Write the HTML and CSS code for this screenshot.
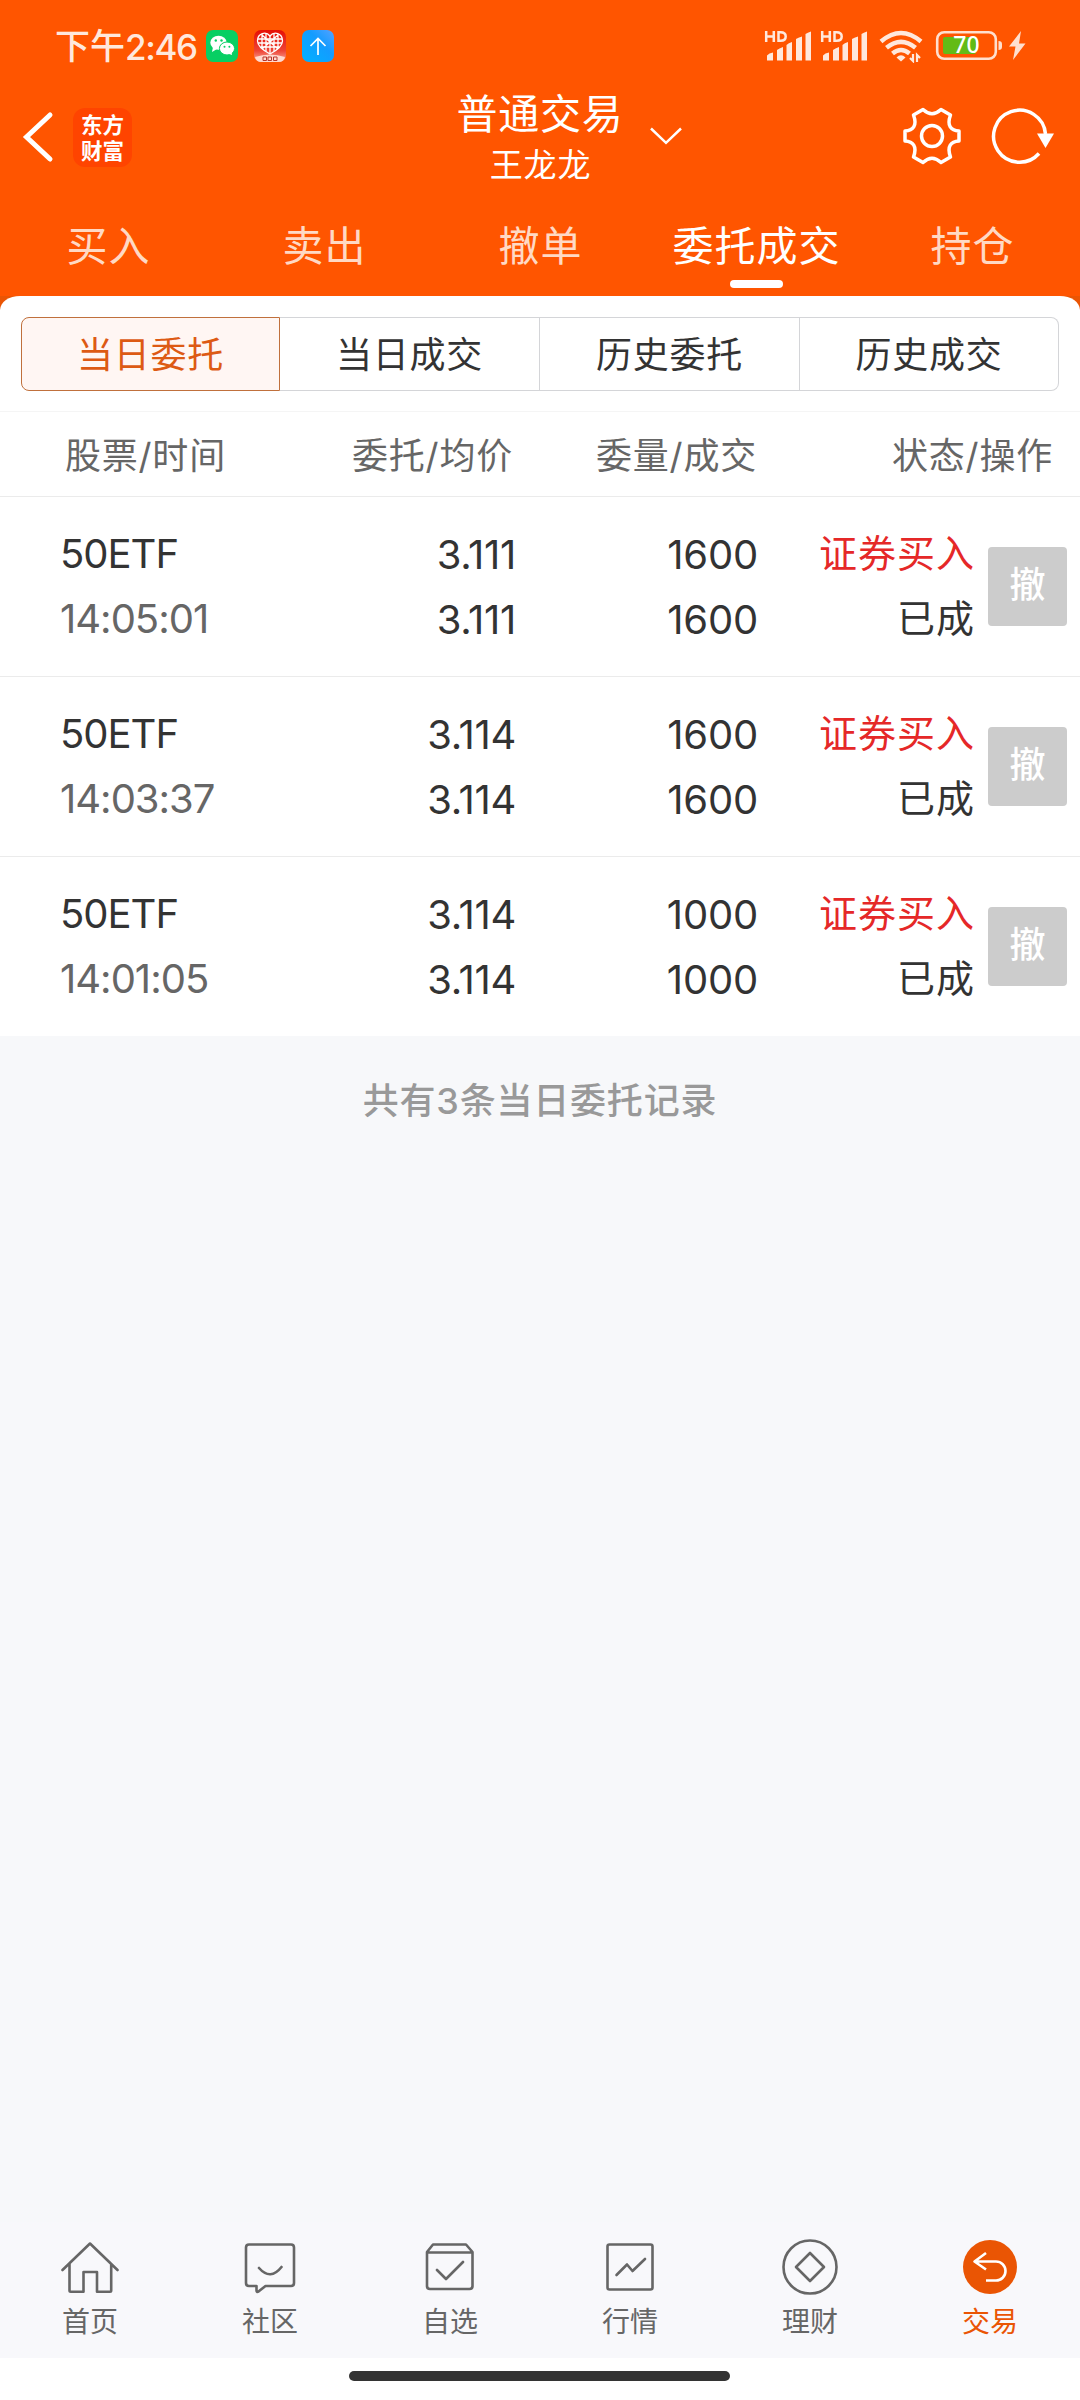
FILE: index.html
```html
<!DOCTYPE html>
<html lang="zh-CN">
<head>
<meta charset="utf-8">
<title>普通交易</title>
<link rel="stylesheet" href="styles.css">
</head>
<body>
<div class="screen">
  <header class="top">
    <div class="status">
      <span class="clock"><span>下午</span><span class="clock-num">2:46</span></span>
      <svg class="apps" width="128" height="32" viewBox="0 0 128 32">
        <defs>
          <linearGradient id="red" x1="0" y1="0" x2="0" y2="1"><stop offset="0" stop-color="#e60f05"/><stop offset=".65" stop-color="#ee4436"/><stop offset="1" stop-color="#fbb0a2"/></linearGradient>
          <linearGradient id="blue" x1="0" y1="1" x2="1" y2="0"><stop offset="0" stop-color="#00b2ff"/><stop offset=".6" stop-color="#149cff"/><stop offset="1" stop-color="#55a2ff"/></linearGradient>
        </defs>
        <rect width="32" height="32" rx="7" fill="#07cf63"/>
        <ellipse cx="12.500" cy="12.800" rx="8.200" ry="7" fill="#fff"/>
        <path d="M7 17l-1 5 5-3z" fill="#fff"/>
        <circle cx="9.800" cy="10.500" r="1.200" fill="#07cf63"/><circle cx="15.500" cy="10.500" r="1.200" fill="#07cf63"/>
        <ellipse cx="21" cy="18.500" rx="7.600" ry="6.500" fill="#fff" stroke="#07cf63" stroke-width="1"/>
        <path d="M22 23.500l4 1.500-.5-4z" fill="#fff"/>
        <circle cx="18.500" cy="16.800" r="1" fill="#07cf63"/><circle cx="23.400" cy="16.800" r="1" fill="#07cf63"/>
        <rect x="48" width="32" height="32" rx="7" fill="url(#red)"/>
        <g fill="none" stroke="#fff" stroke-width="1.300">
          <path d="M64 6C60 1 51.500 3 51.500 11c0 5 5 9 12.500 13 7.500-4 12.500-8 12.500-13C76.500 3 68 1 64 6z"/>
          <path d="M56 4v14M60 4v17M64 6v17M68 4v17M72 4v14M52 9h24M52 13h24M55 17h18M56 5l16 14M72 5L56 19"/>
        </g>
        <path d="M49 27q15-5 30 0-1 5-7 5H56q-6 0-7-5z" fill="#ffd9cf"/>
        <path d="M57 27h3.500v3.500H57zM62 27h3.500v3.500H62zM67.500 27H71v3.500h-3.500z" fill="none" stroke="#b8372c" stroke-width="1"/>
        <rect x="96" width="32" height="32" rx="7" fill="url(#blue)"/>
        <path d="M112 25V8.500M104.500 16l7.500-7.500 7.500 7.500" fill="none" stroke="#fff" stroke-width="1.700"/>
      </svg>
      <svg class="signals" width="262" height="34" viewBox="764 30 262 34">
        <defs>
          <g id="signal">
            <path d="M766.200 32v11M773.800 32v11M766 37.500h7.500M778.500 33.200v8.600h2q5.200 0 5.200-4.300t-5.200-4.300z" fill="none" stroke="#ffe8dc" stroke-width="2.500"/>
            <path d="M767 56.500q2-2.500 6-3V61.500h-6zM777 51q2-1.500 6-3V61.500h-6zM786.500 46q2-2 5.500-3V61.500h-5.500zM796 40q2-1.500 6-2.500V61.500h-6zM805.500 35q2-1.500 5.500-2.500V61.500h-5.500z" fill="#ffe8dc"/>
          </g>
        </defs>
        <use href="#signal"/>
        <use href="#signal" x="56"/>
        <g fill="none" stroke="#ffe8dc" stroke-width="4.500">
          <path d="M881 42.500q20-17 40 0M886.500 48.800q14.500-12 29 0M892.500 54.500q8.500-7 17 0"/>
          <path d="M913 55v7l-3-3M917 63v-7l3 3" stroke-width="2.200"/>
        </g>
        <path d="M896.500 58.500q4.500-4.500 9 0L901 62.500z" fill="#ffe8dc"/>
        <rect x="937.200" y="33.200" width="58.600" height="26.600" rx="7" fill="none" stroke="#ffdfce" stroke-width="2.600"/>
        <rect x="943" y="38" width="33" height="17" rx="2" fill="#63bb16"/>
        <path d="M998.500 42q3.500 0 3.500 3v3q0 3-3.500 3z" fill="#ffdfce"/>
        <path d="M1021 32l-12 15.500h6.500L1013 61l12.500-16.500h-6.500z" fill="#ffdfce"/>
        <text x="966.500" y="54" class="battery">70</text>
      </svg>
    </div>
    <div class="bar">
      <div class="bar-left">
        <svg width="34" height="54" viewBox="0 0 34 54"><path d="M28 5L4.500 27 28 49" fill="none" stroke="#fff" stroke-width="5" stroke-linecap="round"/></svg>
        <div class="logo">东方<br>财富</div>
      </div>
      <div class="title"><span class="title-main">普通交易</span><span class="title-sub">王龙龙</span></div>
      <svg class="caret" width="34" height="20" viewBox="0 0 34 20"><path d="M2 2.500l15 14.300 15-14.300" fill="none" stroke="#fff" stroke-width="2.500"/></svg>
      <div class="bar-right">
        <svg width="60" height="60" viewBox="-30 -30 60 60" fill="none" stroke="#fff" stroke-width="3.500" stroke-linejoin="round">
          <circle r="10.500"/>
          <path d="M-9 -26.500Q0 -18 9 -26.500L18.500 -21C14.500 -10 19 -5.500 27 -5V5C19 5.500 14.500 10 18.500 21L9 26.500Q0 18 -9 26.500L-18.500 21C-14.500 10 -19 5.500 -27 5V-5C-19 -5.500 -14.500 -10 -18.500 -21Z"/>
        </svg>
        <svg width="66" height="60" viewBox="-30 -30 66 60"><path d="M19 17.500A26 26 0 1 1 25.500 -2" fill="none" stroke="#fff" stroke-width="3.500"/><path d="M17 -2.500h17L25.500 12z" fill="#fff"/></svg>
      </div>
    </div>
    <nav class="tabs">
      <span class="tab">买入</span><span class="tab">卖出</span><span class="tab">撤单</span><span class="tab tab-on">委托成交</span><span class="tab">持仓</span>
    </nav>
  </header>
  <main class="content">
    <div class="sheet-back">
      <div class="sheet">
        <div class="segments"><span class="seg seg-on">当日委托</span><span class="seg">当日成交</span><span class="seg">历史委托</span><span class="seg">历史成交</span></div>
      </div>
    </div>
    <div class="cols head"><span class="h-name">股票/时间</span><span class="h-num">委托/均价</span><span class="h-num">委量/成交</span><span class="h-state">状态/操作</span></div>
    <div class="cols row">
      <div class="pair name"><span>50ETF</span><span class="time">14:05:01</span></div>
      <div class="pair price"><span>3.111</span><span>3.111</span></div>
      <div class="pair amount"><span>1600</span><span>1600</span></div>
      <div class="pair state"><span class="buy">证券买入</span><span>已成</span></div>
      <span class="cancel">撤</span>
    </div>
    <div class="cols row">
      <div class="pair name"><span>50ETF</span><span class="time">14:03:37</span></div>
      <div class="pair price"><span>3.114</span><span>3.114</span></div>
      <div class="pair amount"><span>1600</span><span>1600</span></div>
      <div class="pair state"><span class="buy">证券买入</span><span>已成</span></div>
      <span class="cancel">撤</span>
    </div>
    <div class="cols row">
      <div class="pair name"><span>50ETF</span><span class="time">14:01:05</span></div>
      <div class="pair price"><span>3.114</span><span>3.114</span></div>
      <div class="pair amount"><span>1000</span><span>1000</span></div>
      <div class="pair state"><span class="buy">证券买入</span><span>已成</span></div>
      <span class="cancel">撤</span>
    </div>
    <p class="summary">共有3条当日委托记录</p>
  </main>
  <nav class="bottom">
    <div class="item"><svg viewBox="60 2237 60 60"><path d="M62.500 2270L90 2243.500 117.500 2270M69.500 2264v26.500q0 1.200 1.200 1.200H83.500V2272h13.500v19.700h13q1.200 0 1.200-1.200V2264"/></svg><span>首页</span></div>
    <div class="item"><svg viewBox="240 2237 60 60"><path d="M249 2244.500h42q3 0 3 3v35.500q0 3-3 3H265.500l-7 5.500q-2 1-2-1V2286H249q-3 0-3-3v-35.500q0-3 3-3zM259 2268q11.500 13 22.500-1"/></svg><span>社区</span></div>
    <div class="item"><svg viewBox="420 2237 60 60"><path d="M427 2252.500h45.500M427 2252l6-7.500h33l6.500 7.500v34q0 3-3 3h-39.500q-3 0-3-3zM437 2270l9 9 17-17"/></svg><span>自选</span></div>
    <div class="item"><svg viewBox="600 2237 60 60"><rect x="607.500" y="2244.500" width="45" height="45" rx="2"/><path d="M616.500 2275l10.500-10.500 5.500 6.500 12.500-12"/></svg><span>行情</span></div>
    <div class="item"><svg viewBox="780 2237 60 60"><circle cx="810" cy="2267" r="26.500"/><path d="M810 2253l14 14-14 14-14-14z"/></svg><span>理财</span></div>
    <div class="item item-on"><svg viewBox="960 2237 60 60"><circle cx="990" cy="2267" r="27" fill="#ea5504" stroke="none"/><path d="M986 2253l-11.500 8.500 11.500 8M974.500 2261.500H996a9.300 9.300 0 0 1 0 19H986" stroke="#fff" stroke-linecap="butt"/></svg><span>交易</span></div>
  </nav>
  <div class="gesture"><div class="pill"></div></div>
</div>
</body>
</html>
```

FILE: styles.css
```css
* { box-sizing: border-box; }
body { margin: 0; font-family: Inter, "Noto Sans CJK SC", sans-serif; color: #333; }
svg { display: block; flex: none; }
.screen { width: 1080px; height: 2400px; display: flex; flex-direction: column; background: #f7f8fa; white-space: nowrap; }
.top { height: 296px; background: #ff5500; color: #fff; }
.status { height: 92px; display: flex; align-items: center; padding: 0 54px 0 55px; }
.clock { width: 151px; display: flex; align-items: center; font-size: 35px; line-height: 40px; font-weight: 500; color: #ffe8dc; }
.clock-num { letter-spacing: -1.4px; padding-top: 1px; }
.signals { margin-left: auto; }
.battery { font: 500 23px "Noto Sans", sans-serif; fill: #fff; text-anchor: middle; }
.bar { height: 112px; display: grid; grid-template-columns: 458px 164px 1fr auto; padding-right: 24px; }
.bar-left { display: flex; align-items: center; gap: 17px; padding: 0 0 22px 22px; }
.logo { width: 59px; height: 59px; padding-top: 3px; border-radius: 12px; background: #ff4400; text-align: center; font: 700 21.500px/26px "Noto Sans CJK SC", sans-serif; }
.title { display: flex; flex-direction: column; align-items: center; }
.title-main { font-size: 41px; line-height: 44px; letter-spacing: .8px; }
.title-sub { font-size: 33px; line-height: 36px; letter-spacing: .8px; margin-top: 11px; padding-left: 1px; }
.caret { margin: 34px 0 0 27px; }
.bar-right { display: flex; gap: 28px; padding-top: 14px; }
.tabs { height: 92px; display: grid; grid-template-columns: repeat(5, 1fr); color: #ffd9c4; }
.tab { display: flex; flex-direction: column; align-items: center; font-size: 41px; line-height: 60px; letter-spacing: 1px; padding: 12px 0 0 1px; }
.tab-on { color: #fff; }
.tab-on::after { content: ""; width: 53px; height: 8px; margin-top: 4px; border-radius: 4px; background: #fff; }
.content { flex: 1; }
.sheet-back { background: linear-gradient(#ea5504 30px, #fff 30px); }
.sheet { height: 116px; padding: 21px 21px 0; background: #fff; border-radius: 20px 20px 0 0 / 14px 14px 0 0; border-bottom: 1px solid #f5f5f5; }
.segments { height: 74px; display: grid; grid-template-columns: 259px 260px 260px 259px; }
.seg { display: flex; align-items: center; justify-content: center; font-size: 36px; letter-spacing: .7px; border: 1px solid #d4d5d8; border-left-width: 0; padding-bottom: 4px; }
.seg:last-child { border-radius: 0 8px 8px 0; }
.seg-on { color: #dd5a14; background: #fff6f3; border: 1px solid #c0703c; border-radius: 8px 0 0 8px; }
.cols { display: grid; background: #fff; }
.head { height: 84px; grid-template-columns: 270px 243px 244px 296px; align-items: center; padding-bottom: 3px; font-size: 36px; letter-spacing: .8px; color: #666; }
.h-name { padding-left: 65px; }
.h-num, .h-state { text-align: right; }
.row { height: 180px; border-top: 1px solid #ebebeb; grid-template-columns: 300px 216px 242px 217px 79px; padding-top: 24px; font-size: 40px; }
.pair { display: flex; flex-direction: column; line-height: 65px; align-items: flex-end; }
.name { align-items: flex-start; padding-left: 60px; letter-spacing: -1px; }
.time { color: #666; }
.price { padding-top: 1px; letter-spacing: -.3px; }
.amount { padding-top: 1px; letter-spacing: -.2px; }
.state { font-size: 38px; letter-spacing: 1px; }
.buy { color: #e52828; }
.cancel { width: 79px; height: 79px; margin: 26px 0 0 13px; border-radius: 4px; background: #ccc; color: #fff; font-size: 36px; line-height: 76px; font-weight: 500; text-align: center; }
.summary { margin: 40px 0 0; text-align: center; font-size: 36px; line-height: 50px; letter-spacing: .8px; font-weight: 500; color: #999; }
.bottom { height: 136px; background: #f8f8fb; display: grid; grid-template-columns: repeat(6, 1fr); }
.item { display: flex; flex-direction: column; align-items: center; padding-top: 15px; font-size: 28px; line-height: 36px; color: #666; }
.item svg { width: 60px; height: 60px; margin-bottom: 7px; fill: none; stroke: #666; stroke-width: 2.6; stroke-linecap: round; stroke-linejoin: round; }
.item-on { color: #ea5504; }
.gesture { height: 42px; background: #fff; display: flex; justify-content: center; padding: 13px 1px 0 0; }
.pill { width: 381px; height: 10px; border-radius: 5px; background: #333; }
```
